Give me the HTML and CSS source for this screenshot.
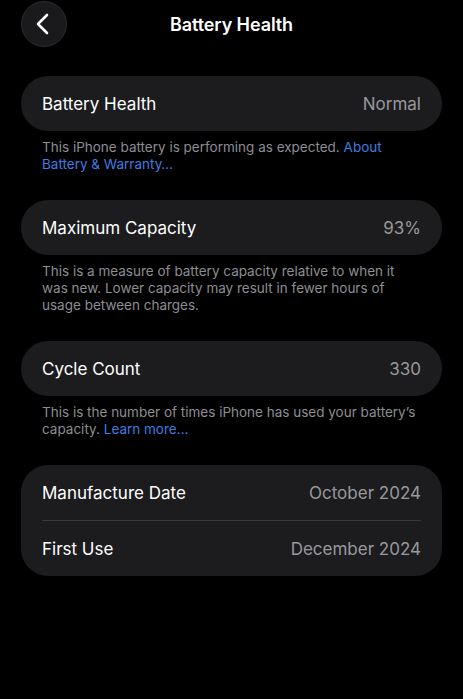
FILE: index.html
```html
<!DOCTYPE html>
<html>
<head>
<meta charset="utf-8">
<link rel="stylesheet" href="styles.css">
</head>
<body>
<div class="screen">
  <header class="nav">
    <button class="back" aria-label="Back">
      <svg width="46" height="46" viewBox="0 0 46 46"><path d="M27 14 L18 23 L27 32" fill="none" stroke="#ffffff" stroke-width="2.6" stroke-linecap="round" stroke-linejoin="round"/></svg>
    </button>
    <h1 class="title">Battery Health</h1>
  </header>

  <section class="card">
    <div class="row"><span class="label">Battery Health</span><span class="value">Normal</span></div>
  </section>
  <p class="note">This iPhone battery is performing as expected. <a class="link">About Battery &amp; Warranty…</a></p>

  <section class="card">
    <div class="row"><span class="label">Maximum Capacity</span><span class="value">93%</span></div>
  </section>
  <p class="note">This is a measure of battery capacity relative to when it was new. Lower capacity may result in fewer hours of usage between charges.</p>

  <section class="card">
    <div class="row"><span class="label">Cycle Count</span><span class="value">330</span></div>
  </section>
  <p class="note">This is the number of times iPhone has used your battery’s capacity. <a class="link">Learn more…</a></p>

  <section class="card">
    <div class="row"><span class="label">Manufacture Date</span><span class="value">October 2024</span></div>
    <div class="divider"></div>
    <div class="row"><span class="label">First Use</span><span class="value">December 2024</span></div>
  </section>
</div>
</body>
</html>
```
FILE: styles.css
```css
* { box-sizing: border-box; }
html, body {
  margin: 0;
  background: #000;
  height: 100%;
}
body {
  font-family: Inter, "Noto Sans", "Liberation Sans", sans-serif;
  color: #fff;
}
.screen {
  padding: 1px 21px 0 21px;
}
.nav {
  position: relative;
  height: 46px;
  display: flex;
  align-items: center;
  justify-content: center;
  margin-bottom: 29px;
}
.back {
  position: absolute;
  left: 0;
  top: 0;
  width: 46px;
  height: 46px;
  border-radius: 50%;
  background: #1a1a1c;
  border: 1px solid #2c2c2e;
  padding: 0;
  display: flex;
  align-items: center;
  justify-content: center;
}
.back svg { display: block; margin-left: -2px; }
.title {
  margin: 0;
  font-size: 18px;
  font-weight: 600;
  letter-spacing: -0.1px;
}
.card {
  background: #1c1c1e;
  border-radius: 27px;
  padding: 0 21px;
}
.row {
  height: 55px;
  display: flex;
  align-items: center;
  justify-content: space-between;
}
.label {
  font-size: 17px;
  color: #fff;
}
.value {
  font-size: 17px;
  color: #98989d;
}
.divider {
  height: 1px;
  background: #38383a;
}
.note {
  margin: 0;
  padding: 8px 21px 0 21px;
  margin-bottom: 27px;
  font-size: 13.5px;
  line-height: 17px;
  color: #8d8d93;
}
.link { color: #3e7de0; }
```
